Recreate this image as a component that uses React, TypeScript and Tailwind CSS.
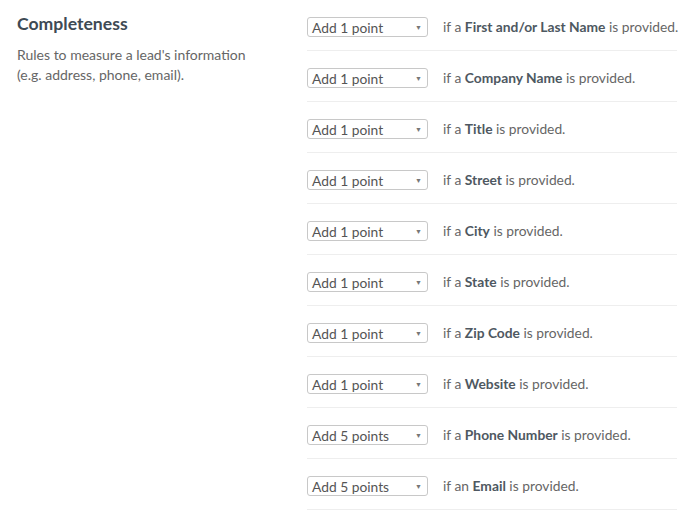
const RULES: { value: string; article: string; field: string }[] = [
  { value: "Add 1 point", article: "a", field: "First and/or Last Name" },
  { value: "Add 1 point", article: "a", field: "Company Name" },
  { value: "Add 1 point", article: "a", field: "Title" },
  { value: "Add 1 point", article: "a", field: "Street" },
  { value: "Add 1 point", article: "a", field: "City" },
  { value: "Add 1 point", article: "a", field: "State" },
  { value: "Add 1 point", article: "a", field: "Zip Code" },
  { value: "Add 1 point", article: "a", field: "Website" },
  { value: "Add 5 points", article: "a", field: "Phone Number" },
  { value: "Add 5 points", article: "an", field: "Email" },
];

function PointSelect({ value }: { value: string }) {
  return (
    <div className="flex h-[20px] w-[121px] shrink-0 items-center justify-between rounded-[3px] border border-[#c8c8c8] bg-white pl-[4px] pr-[5px] text-[13.8px] leading-none text-[#555]">
      <span className="pt-[2px]">{value}</span>
      <span className="text-[7px] text-[#777]">▼</span>
    </div>
  );
}

export default function App() {
  return (
    <div className="flex w-[695px] bg-white font-['Lato','Liberation_Sans',sans-serif] text-[#555]">
      <div className="w-[307px] shrink-0 pl-[17px] pt-[12px]">
        <h2 className="text-[17.6px] font-bold leading-[24px] text-[#3e4a54]">Completeness</h2>
        <p className="mt-[9px] text-[14px] leading-[20px] text-[#666]">
          Rules to measure a lead's information
          <br />
          (e.g. address, phone, email).
        </p>
      </div>
      <div className="w-[370px] shrink-0">
        {RULES.map((rule) => (
          <div
            key={rule.field}
            className="flex items-center border-b border-[#eeeeee] pb-[13px] pt-[17px]"
          >
            <PointSelect value={rule.value} />
            <p className="ml-[15px] whitespace-nowrap text-[13.8px] leading-[20px] text-[#666]">
              if {rule.article} <b className="font-bold text-[#4e5861]">{rule.field}</b> is provided.
            </p>
          </div>
        ))}
      </div>
    </div>
  );
}
